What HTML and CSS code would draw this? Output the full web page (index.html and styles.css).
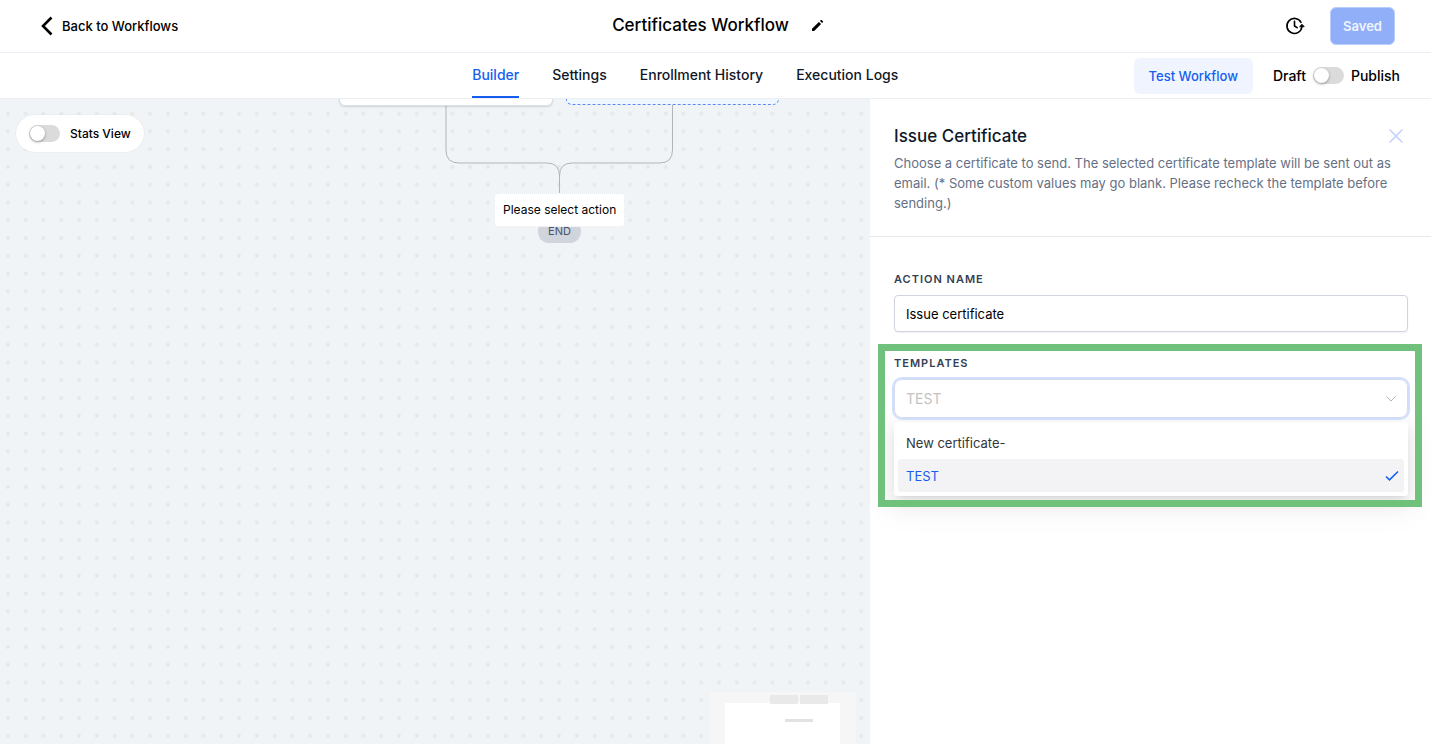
FILE: index.html
```html
<!DOCTYPE html>
<html lang="en">
<head>
    <meta charset="UTF-8">
    <meta name="viewport" content="width=device-width, initial-scale=1.0">
    <title>Certificates Workflow</title>
    <link rel="stylesheet" href="styles.css">
</head>
<body>
    <header class="topbar">
        <a href="#" class="back-link">
            <svg width="12" height="20" viewBox="0 0 12 20" fill="none" stroke="currentColor" stroke-width="2.6"><path d="M10.500 1.500 2 10l8.500 8.500"/></svg>
            Back to Workflows
        </a>
        <div class="title">
            <h1>Certificates Workflow</h1>
            <button class="icon-button" aria-label="Rename workflow">
                <svg width="13" height="13" viewBox="0 0 13 13" fill="currentColor"><path d="M1 12V9.800L7.900 2.900l2.200 2.200L3.200 12zM9 1.900l.8-.8c.3-.3.7-.3 1 0l1.100 1.100c.3.3.3.7 0 1l-.8.8z"/></svg>
            </button>
        </div>
        <div class="topbar-actions">
            <button class="icon-button" aria-label="Version history">
                <svg width="20" height="20" viewBox="0 0 20 20" fill="none" stroke="currentColor" stroke-width="1.600" stroke-linecap="round" stroke-linejoin="round"><path d="M16 6.300A7.500 7.500 0 1 0 16.900 10.500"/><path d="M9.500 5.200v4.800l2.600 1.700"/><path d="M14.900 10.400 17 8.300l1.900 2.100z" fill="currentColor" stroke-width="1"/></svg>
            </button>
            <button class="saved-button">Saved</button>
        </div>
    </header>

    <div class="tabbar">
        <nav class="tabs">
            <a href="#" class="tab active">Builder</a>
            <a href="#" class="tab">Settings</a>
            <a href="#" class="tab">Enrollment History</a>
            <a href="#" class="tab">Execution Logs</a>
        </nav>
        <div class="tabbar-actions">
            <button class="test-button">Test Workflow</button>
            <div class="publish">
                <span>Draft</span>
                <input type="checkbox" id="publish" class="switch">
                <label for="publish">Publish</label>
            </div>
        </div>
    </div>

    <main class="workspace">
        <section class="canvas">
            <svg class="canvas-grid" width="100%" height="100%">
                <defs>
                    <pattern id="dots" width="20" height="20" patternUnits="userSpaceOnUse" patternTransform="translate(-1 5.700) scale(.8889)">
                        <circle cx="10" cy="10" r="2.100" fill="#e5e7e9"/>
                    </pattern>
                </defs>
                <rect width="100%" height="100%" fill="url(#dots)"/>
                <g fill="none" stroke="#b1b5b9">
                    <path d="M446 6v45q0 13 13 13h88q12.500 0 12.500 13v17"/>
                    <path d="M672.500 6v45q0 13-13 13H572q-12.500 0-12.500 13"/>
                </g>
            </svg>
            <div class="node node-step"></div>
            <div class="node node-dashed"></div>
            <div class="node node-end">END</div>
            <div class="node node-placeholder">Please select action</div>

            <div class="stats-toggle">
                <input type="checkbox" id="stats" class="switch">
                <label for="stats">Stats View</label>
            </div>

            <svg class="minimap" width="146" height="52" viewBox="0 0 146 52">
                <rect width="146" height="52" fill="#f6f6f6"/>
                <rect x="15" y="11" width="115" height="41" fill="#fff"/>
                <rect x="60" y="3" width="28" height="9" fill="#e9e9e9"/>
                <rect x="90" y="3" width="28" height="9" fill="#e9e9e9"/>
                <rect x="75" y="27" width="28" height="3" fill="#e2e2e2"/>
            </svg>
        </section>

        <aside class="panel">
            <div class="panel-header">
                <div class="panel-title">
                    <h2>Issue Certificate</h2>
                    <button class="icon-button close-button" aria-label="Close">
                        <svg width="16" height="16" viewBox="0 0 16 16" fill="none" stroke="currentColor" stroke-width="1.600" stroke-linecap="round"><path d="M2 2l12 12M14 2 2 14"/></svg>
                    </button>
                </div>
                <p>Choose a certificate to send. The selected certificate template will be sent out as email. (* Some custom values may go blank. Please recheck the template before sending.)</p>
            </div>
            <div class="panel-body">
                <label for="actionName" class="field-label">Action Name</label>
                <input type="text" id="actionName" class="text-input" value="Issue certificate">

                <div class="highlight">
                    <label for="template" class="field-label">Templates</label>
                    <div class="select-wrap">
                        <select id="template" class="select-input">
                            <option>New certificate-</option>
                            <option selected>TEST</option>
                        </select>
                        <svg class="chevron" width="12" height="8" viewBox="0 0 12 8" fill="none" stroke="#b4b4b4"><path d="M1.500 1.500 6 6l4.500-4.500"/></svg>
                    </div>
                    <div class="options" role="listbox" aria-label="Templates">
                        <button class="option" role="option">New certificate-</button>
                        <button class="option selected" role="option" aria-selected="true">
                            TEST
                            <svg width="14" height="12" viewBox="0 0 14 12" fill="none" stroke="currentColor" stroke-width="1.600"><path d="M1 6.500l3.500 3.300L13 1.500"/></svg>
                        </button>
                    </div>
                </div>
            </div>
        </aside>
    </main>
</body>
</html>
```

FILE: styles.css
```css
* {
    box-sizing: border-box;
}
body {
    margin: 0;
    height: 100vh;
    display: flex;
    flex-direction: column;
    overflow: hidden;
    font-family: Inter, "Liberation Sans", sans-serif;
    font-size: 14px;
    line-height: 20px;
    color: #000;
    background-color: #fff;
}
h1, h2, p {
    margin: 0;
}
a {
    color: inherit;
    text-decoration: none;
}
button {
    font: inherit;
    color: inherit;
    border: none;
    background: none;
    padding: 0;
    cursor: pointer;
}
svg {
    display: block;
}
.icon-button {
    display: flex;
}

/* top bar */
.topbar {
    flex: none;
    display: grid;
    grid-template-columns: 1fr auto 1fr;
    align-items: center;
    height: 53px;
    padding: 0 36px 0 41px;
    border-bottom: 1px solid #eceef5;
}
.back-link {
    display: flex;
    align-items: center;
    gap: 9px;
    font-size: 13px;
    font-weight: 500;
}
.title {
    display: flex;
    align-items: center;
    gap: 22px;
    padding-bottom: 2px;
}
.title h1 {
    font-size: 17px;
    font-weight: 500;
    line-height: 24px;
}
.topbar-actions {
    display: flex;
    align-items: center;
    justify-content: flex-end;
    gap: 25px;
}
.saved-button {
    height: 38px;
    padding: 0 12px;
    border: 1px solid #b9ccfb;
    border-radius: 6px;
    background-color: #91aff9;
    color: #f0f4ff;
    font-size: 13px;
    font-weight: 600;
}

/* tabs */
.tabbar {
    flex: none;
    display: flex;
    justify-content: space-between;
    height: 46px;
    padding: 0 31px 0 33%;
    border-bottom: 1px solid #eceef1;
}
.tabs {
    display: flex;
    gap: 33px;
}
.tab {
    padding-top: 12px;
    border-bottom: 2px solid transparent;
    font-weight: 500;
    color: #101828;
}
.tab.active {
    color: #155eef;
    border-bottom-color: #155eef;
}
.tabbar-actions {
    display: flex;
    align-items: center;
    gap: 20px;
    font-weight: 500;
}
.test-button {
    height: 36px;
    padding: 0 15px;
    border-radius: 6px;
    background-color: #eff4ff;
    color: #155eef;
    font-size: 13px;
    font-weight: 500;
}
.publish {
    display: flex;
    align-items: center;
    gap: 7px;
}
.switch {
    appearance: none;
    flex: none;
    display: flex;
    align-items: center;
    width: 31px;
    height: 17px;
    margin: 0;
    padding: 1px;
    border-radius: 9px;
    background-color: #dbdbdb;
}
.switch::before {
    content: "";
    width: 15px;
    height: 15px;
    border-radius: 50%;
    background-color: #fff;
    box-shadow: 0 1px 3px rgba(0, 0, 0, 0.35);
}
.switch:checked {
    justify-content: flex-end;
    background-color: #155eef;
}

/* workflow canvas */
.workspace {
    flex: 1;
    display: flex;
    min-height: 0;
}
.canvas {
    position: relative;
    flex: 1;
    overflow: hidden;
    background-color: #f0f4f7;
}
.canvas-grid {
    position: absolute;
    inset: 0;
}
.node {
    position: absolute;
}
.node-step {
    left: 339px;
    top: -40px;
    width: 214px;
    height: 47px;
    border: 1px solid #dcdfe3;
    border-radius: 6px;
    background-color: #fff;
    box-shadow: 0 1px 2px rgba(16, 24, 40, 0.15);
}
.node-dashed {
    left: 566px;
    top: -40px;
    width: 213px;
    height: 46px;
    border: 1px dashed #5b8af5;
    border-radius: 6px;
    background-color: #eff8ff;
}
.node-placeholder {
    left: 494px;
    top: 94px;
    padding: 6px 8px;
    border: 1px dotted #e4e7ec;
    border-radius: 4px;
    background-color: #fff;
    font-size: 12px;
    white-space: nowrap;
}
.node-end {
    left: 538px;
    top: 121px;
    width: 43px;
    border-radius: 12px;
    background-color: #d0d5dd;
    color: #475467;
    font-size: 11px;
    line-height: 23px;
    text-align: center;
}
.stats-toggle {
    position: absolute;
    left: 16px;
    top: 16px;
    display: flex;
    align-items: center;
    gap: 10px;
    height: 37px;
    padding: 0 13px;
    border-radius: 19px;
    background-color: #fff;
    box-shadow: 0 0 2px rgba(16, 24, 40, 0.08);
    font-size: 12px;
    font-weight: 500;
}
.minimap {
    position: absolute;
    right: 14px;
    bottom: 0;
}

/* action panel */
.panel {
    flex: none;
    width: 561px;
    background-color: #fff;
}
.panel-header {
    padding: 27px 24px 23px;
    border-bottom: 1px solid #e6e8ec;
}
.panel-title {
    display: flex;
    align-items: center;
    justify-content: space-between;
    padding-right: 3px;
}
.panel-title h2 {
    font-size: 17px;
    font-weight: 500;
    line-height: 20px;
    color: #101828;
}
.close-button {
    color: #c3d0fb;
}
.panel-header p {
    margin-top: 7px;
    font-size: 13px;
    line-height: 20px;
    color: #667085;
}
.panel-body {
    padding: 34px 23px 34px 24px;
}
.field-label {
    display: block;
    font-size: 11px;
    font-weight: 600;
    line-height: 16px;
    letter-spacing: 1px;
    text-transform: uppercase;
    color: #344054;
}
.text-input {
    display: block;
    width: 100%;
    height: 37px;
    margin-top: 8px;
    padding: 0 11px;
    border: 1px solid #d0d5dd;
    border-radius: 4px;
    background-color: #fff;
    box-shadow: 0 1px 2px rgba(16, 24, 40, 0.06);
    font: inherit;
    font-size: 13px;
}
.highlight {
    position: relative;
    margin: 12px -14px 0 -16px;
    padding: 11px 14px 11px 16px;
}
/* frame sits above the shadow of the open list */
.highlight::after {
    content: "";
    position: absolute;
    inset: 0;
    border: 7px solid #70c17c;
    pointer-events: none;
}
.select-wrap {
    position: relative;
    margin-top: 8px;
}
.select-input {
    appearance: none;
    display: block;
    width: 100%;
    height: 39px;
    padding: 0 11px;
    border: 1px solid #d5dbee;
    border-radius: 8px;
    outline: 2px solid #d1defc;
    background-color: #fff;
    font: inherit;
    font-size: 14px;
    color: #c2c2c2;
}
.chevron {
    position: absolute;
    right: 11px;
    top: 16px;
    pointer-events: none;
}
.options {
    margin-top: 4px;
    padding: 4px;
    border-radius: 3px;
    background-color: #fff;
    box-shadow: 0 3px 6px -4px rgba(0, 0, 0, 0.12), 0 6px 16px rgba(0, 0, 0, 0.08), 0 9px 28px 8px rgba(0, 0, 0, 0.05);
}
.option {
    display: flex;
    align-items: center;
    justify-content: space-between;
    width: 100%;
    height: 33px;
    padding: 0 5px 0 8px;
    border-radius: 3px;
    font-size: 13px;
    color: #333639;
}
.option.selected {
    background-color: #f3f3f5;
    color: #155eef;
}
```
